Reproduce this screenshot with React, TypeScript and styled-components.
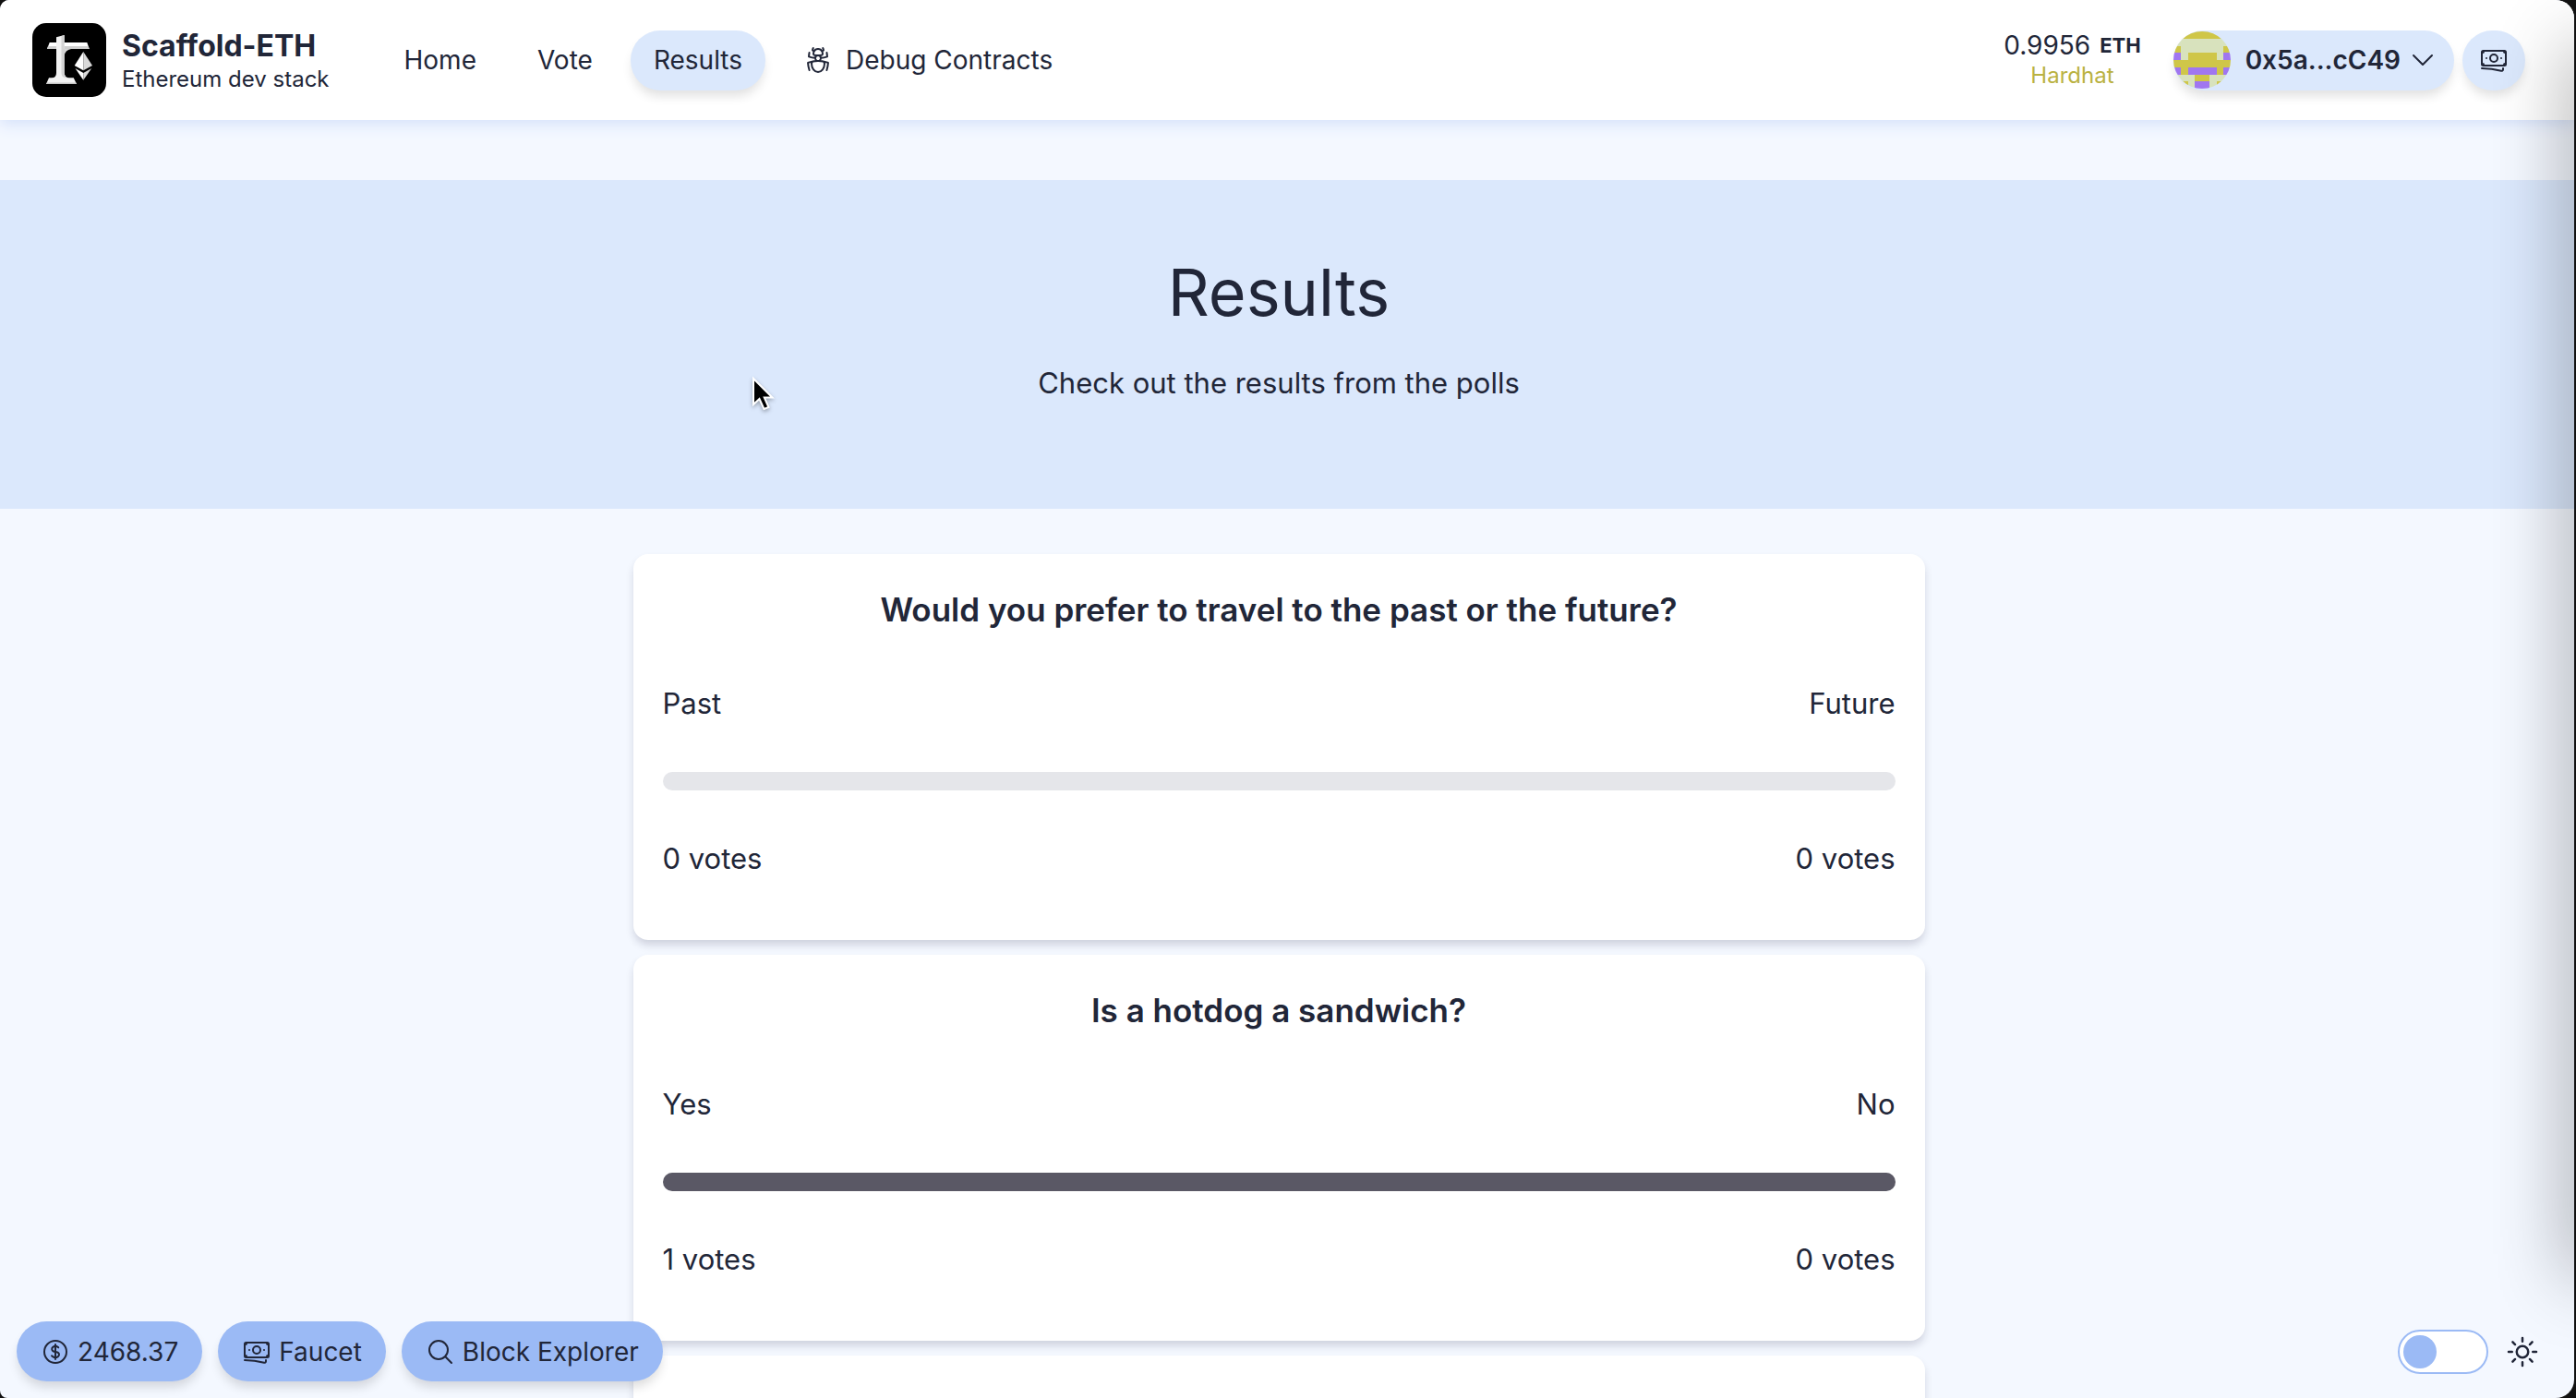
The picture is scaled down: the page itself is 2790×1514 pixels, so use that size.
import React, { useState } from "react";
import styled, { createGlobalStyle } from "styled-components";
import {
  HiOutlineBanknotes,
  HiOutlineBugAnt,
  HiOutlineChevronDown,
  HiOutlineCurrencyDollar,
  HiOutlineMagnifyingGlass,
  HiOutlineSun,
} from "react-icons/hi2";

const color = {
  ink: "#212638",
  page: "#f4f8ff",
  surface: "#ffffff",
  soft: "#dbe8fc",
  accent: "#9bbaf5",
  track: "#e5e6ea",
  fill: "#5a5865",
  network: "#bab242",
};

const GlobalStyle = createGlobalStyle`
  *, *::before, *::after { box-sizing: border-box; }
  body {
    margin: 0;
    background: #111;
    color: ${color.ink};
    font-family: Inter, "Liberation Sans", sans-serif;
    font-size: 28px;
    line-height: 40px;
  }
  h1, h2, p { margin: 0; }
  button { font: inherit; color: inherit; border: 0; cursor: pointer; }
  a { color: inherit; text-decoration: none; }
`;

const Window = styled.div`
  position: relative;
  height: 100vh;
  margin-right: 2px;
  overflow: hidden;
  border-radius: 10px 20px 20px 8px;
  background: ${color.page};
`;

const EdgeShade = styled.div`
  position: absolute;
  top: 48px;
  bottom: 130px;
  left: 100%;
  width: 40px;
  box-shadow: 0 0 80px rgba(0, 0, 0, 0.45);
  pointer-events: none;
`;

const Header = styled.header`
  position: relative;
  display: flex;
  align-items: center;
  height: 130px;
  padding: 0 53px 0 35px;
  background: ${color.surface};
  box-shadow: 0 4px 16px #d3e0fa;
`;

const Brand = styled.a`
  display: flex;
  align-items: center;
  gap: 17px;
  margin-right: 56px;
`;

const BrandText = styled.span`
  display: flex;
  flex-direction: column;
  padding-top: 6px;
`;

const BrandName = styled.span`
  font-size: 32px;
  font-weight: 700;
  line-height: 36px;
`;

const BrandTagline = styled.span`
  font-size: 24px;
  line-height: 36px;
`;

const Nav = styled.nav`
  display: flex;
  gap: 16px;
`;

const NavLink = styled.a<{ $active?: boolean }>`
  display: flex;
  align-items: center;
  gap: 14px;
  height: 65px;
  padding: 0 25px;
  border-radius: 32px;
  background: ${(p) => (p.$active ? color.soft : "transparent")};
  box-shadow: ${(p) => (p.$active ? "0 8px 12px -2px rgba(0, 0, 0, 0.12)" : "none")};
`;

const Account = styled.div`
  display: flex;
  align-items: center;
  margin-left: auto;
  gap: 9px;
`;

const Balance = styled.div`
  display: flex;
  flex-direction: column;
  align-items: center;
  margin-right: 26px;
`;

const Amount = styled.span`
  display: flex;
  align-items: center;
  gap: 10px;
  line-height: 34px;
`;

const Unit = styled.span`
  font-size: 22px;
  font-weight: 700;
`;

const Network = styled.span`
  font-size: 24px;
  line-height: 32px;
  color: ${color.network};
`;

const SoftButton = styled.button`
  display: flex;
  align-items: center;
  height: 65px;
  border-radius: 33px;
  background: ${color.soft};
  box-shadow: 0 8px 12px -2px rgba(0, 0, 0, 0.12);
`;

const AddressButton = styled(SoftButton)`
  gap: 8px;
  padding: 0 18px 0 0;
  font-weight: 600;
`;

const RoundButton = styled(SoftButton)`
  justify-content: center;
  width: 68px;
  padding: 0;
`;

const Avatar = styled.svg`
  width: 62px;
  height: 62px;
  margin-right: 8px;
  border-radius: 50%;
`;

const Banner = styled.section`
  margin-top: 65px;
  padding: 80px 18px 112px 0;
  background: ${color.soft};
  text-align: center;
`;

const BannerTitle = styled.h1`
  font-size: 70px;
  font-weight: 400;
  line-height: 84px;
`;

const BannerText = styled.p`
  margin-top: 32px;
  font-size: 31px;
  line-height: 48px;
`;

const Polls = styled.section`
  display: flex;
  flex-direction: column;
  align-items: center;
  gap: 16px;
  padding: 49px 18px 0 0;
`;

const Card = styled.article`
  display: flex;
  flex-direction: column;
  gap: 50px;
  width: 100%;
  max-width: 1399px;
  padding: 32px 32px 64px;
  border-radius: 16px;
  background: ${color.surface};
  box-shadow: 0 6px 10px -1px rgba(30, 30, 60, 0.18);
  font-size: 31px;
  line-height: 48px;
`;

const Question = styled.h2`
  font-size: 35px;
  font-weight: 600;
  line-height: 56px;
  text-align: center;
`;

const Split = styled.div`
  display: flex;
  justify-content: space-between;
`;

const Progress = styled.progress`
  appearance: none;
  display: block;
  width: 100%;
  height: 20px;
  border: 0;
  border-radius: 10px;
  overflow: hidden;
  background: ${color.track};

  &::-webkit-progress-bar {
    background: ${color.track};
  }
  &::-webkit-progress-value {
    background: ${color.fill};
  }
`;

const Dock = styled.footer`
  position: absolute;
  left: 18px;
  right: 36px;
  bottom: 18px;
  display: flex;
  align-items: center;
  gap: 17px;
`;

const DockButton = styled.button`
  display: flex;
  align-items: center;
  gap: 8px;
  height: 65px;
  padding: 0 26px;
  border-radius: 33px;
  background: ${color.accent};
  box-shadow: 0 8px 12px -2px rgba(0, 0, 0, 0.14);
`;

const ThemeSwitch = styled.label`
  display: flex;
  align-items: center;
  gap: 17px;
  margin-left: auto;
`;

const Toggle = styled.input`
  appearance: none;
  display: flex;
  align-items: center;
  width: 98px;
  height: 48px;
  margin: 0;
  padding: 0 4px;
  border: 2px solid ${color.accent};
  border-radius: 24px;
  background: ${color.surface};
  cursor: pointer;

  &::before {
    content: "";
    width: 36px;
    height: 36px;
    border-radius: 50%;
    background: ${color.accent};
  }
  &:checked {
    justify-content: flex-end;
  }
`;

const Pointer = styled.svg`
  position: absolute;
  left: 812px;
  top: 404px;
  width: 28px;
  height: 44px;
  filter: drop-shadow(0 2px 2px rgba(0, 0, 0, 0.3));
  pointer-events: none;
`;

function Logo() {
  return (
    <svg width="80" height="80" viewBox="0 0 80 80" aria-hidden="true">
      <rect width="80" height="80" rx="15" fill="#000" />
      <path d="M18.7 21H59.3L61.7 28H16z" fill="#fff" />
      <path d="M17 25H60.7L61.7 28H16z" fill="#cfcfcf" />
      <path d="M34.5 28H42Q35.5 29 34.5 36z" fill="#d8d8d8" />
      <path
        d="M26 15.3L34.7 13V54Q35 59.3 40 59.3H44.7L48 66H15L18 59.3H21Q26 59.3 26 54z"
        fill="#f2f2f2"
      />
      <path d="M31.5 14L34.7 13V54Q35 59.3 40 59.3H36Q31.5 59 31.5 54z" fill="#d4d4d4" />
      <path d="M16 64.5H47.3L48 66H15z" fill="#c4c4c4" />
      <path d="M55.3 31L45.7 46L55.3 51.3z" fill="#fff" />
      <path d="M55.3 31L65 46L55.3 51.3z" fill="#d9d9d9" />
      <path d="M46.5 49L55.3 54V61.7z" fill="#fff" />
      <path d="M64.2 49L55.3 54V61.7z" fill="#d9d9d9" />
    </svg>
  );
}

const blockiePalette: Record<string, string> = {
  y: "#cfc648",
  g: "#d8e2bd",
  p: "#a076f0",
};

const blockieRows = [
  "yyyyyyyy",
  "gggggggg",
  "yggggggy",
  "pgyyyygp",
  "yyyyyyyy",
  "pyppppyp",
  "gggyyggg",
  "gygppgyg",
];

function Blockie() {
  return (
    <Avatar viewBox="0 0 8 8" shapeRendering="crispEdges" aria-hidden="true">
      {blockieRows.flatMap((row, y) =>
        row.split("").map((cell, x) => (
          <rect key={`${x}-${y}`} x={x} y={y} width="1" height="1" fill={blockiePalette[cell]} />
        )),
      )}
    </Avatar>
  );
}

type Poll = { question: string; options: [string, string]; votes: [number, number] };

const polls: Poll[] = [
  {
    question: "Would you prefer to travel to the past or the future?",
    options: ["Past", "Future"],
    votes: [0, 0],
  },
  { question: "Is a hotdog a sandwich?", options: ["Yes", "No"], votes: [1, 0] },
  {
    question: "Which superpower would you rather have?",
    options: ["Flight", "Invisibility"],
    votes: [0, 0],
  },
];

function PollCard({ question, options, votes }: Poll) {
  const total = votes[0] + votes[1];
  return (
    <Card>
      <Question>{question}</Question>
      <Split>
        <span>{options[0]}</span>
        <span>{options[1]}</span>
      </Split>
      <Progress aria-label={question} value={votes[0]} max={total || 1} />
      <Split>
        <span>{votes[0]} votes</span>
        <span>{votes[1]} votes</span>
      </Split>
    </Card>
  );
}

export default function App() {
  const [dark, setDark] = useState(false);
  return (
    <>
      <GlobalStyle />
      <Window>
        <Header>
          <Brand href="#home">
            <Logo />
            <BrandText>
              <BrandName>Scaffold-ETH</BrandName>
              <BrandTagline>Ethereum dev stack</BrandTagline>
            </BrandText>
          </Brand>
          <Nav>
            <NavLink href="#home">Home</NavLink>
            <NavLink href="#vote">Vote</NavLink>
            <NavLink href="#results" $active aria-current="page">
              Results
            </NavLink>
            <NavLink href="#debug">
              <HiOutlineBugAnt size={32} />
              Debug Contracts
            </NavLink>
          </Nav>
          <Account>
            <Balance>
              <Amount>
                0.9956 <Unit>ETH</Unit>
              </Amount>
              <Network>Hardhat</Network>
            </Balance>
            <AddressButton type="button">
              <Blockie />
              0x5a...cC49
              <HiOutlineChevronDown size={32} />
            </AddressButton>
            <RoundButton type="button" aria-label="Get funds">
              <HiOutlineBanknotes size={32} />
            </RoundButton>
          </Account>
        </Header>
        <main>
          <Banner>
            <BannerTitle>Results</BannerTitle>
            <BannerText>Check out the results from the polls</BannerText>
          </Banner>
          <Polls>
            {polls.map((poll) => (
              <PollCard key={poll.question} {...poll} />
            ))}
          </Polls>
        </main>
        <Dock>
          <DockButton type="button">
            <HiOutlineCurrencyDollar size={32} />
            2468.37
          </DockButton>
          <DockButton type="button">
            <HiOutlineBanknotes size={32} />
            Faucet
          </DockButton>
          <DockButton type="button">
            <HiOutlineMagnifyingGlass size={32} />
            Block Explorer
          </DockButton>
          <ThemeSwitch>
            <Toggle
              type="checkbox"
              aria-label="Dark theme"
              checked={dark}
              onChange={(e) => setDark(e.target.checked)}
            />
            <HiOutlineSun size={40} />
          </ThemeSwitch>
        </Dock>
        <EdgeShade />
        <Pointer viewBox="0 0 28 44" aria-hidden="true">
          <path
            d="M4 6V34L10.5 28L15.5 39L20.5 37L15.8 26.5H24.5z"
            fill="#000"
            stroke="#fff"
            strokeWidth="2"
          />
        </Pointer>
      </Window>
    </>
  );
}
